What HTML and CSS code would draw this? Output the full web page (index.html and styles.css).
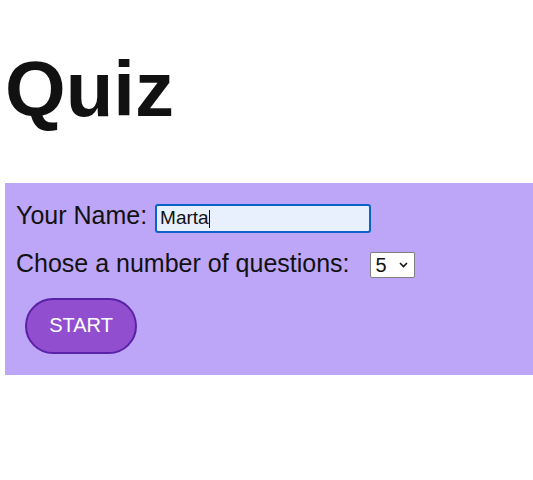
FILE: index.html
```html
<!DOCTYPE html>
<html lang="en">
<head>
<meta charset="utf-8">
<title>Quiz</title>
<link rel="stylesheet" href="styles.css">
</head>
<body>
<h1 class="title">Quiz</h1>
<form class="panel">
  <div class="row row-name">
    <label class="label" for="name">Your Name:</label>
    <span class="field">
      <input class="input" id="name" type="text" value="Marta">
      <span class="caret"></span>
    </span>
  </div>
  <div class="row row-count">
    <label class="label" for="count">Chose a number of questions:</label>
    <select class="select" id="count">
      <option>5</option>
      <option>10</option>
      <option>15</option>
    </select>
  </div>
  <button class="start" type="button">START</button>
</form>
</body>
</html>
```
FILE: styles.css
```css
html, body {
  margin: 0;
  padding: 0;
  background: #ffffff;
}
body {
  padding-left: 5px;
  font-family: "Liberation Sans", Arial, Helvetica, sans-serif;
  color: #111111;
}
.title {
  margin: 45px 0 50px 0;
  font-size: 78px;
  line-height: 88px;
  font-weight: bold;
  color: #111111;
}
.panel {
  display: flex;
  flex-direction: column;
  align-items: flex-start;
  background: #bda5f7;
  padding: 18px 11px 21px 11px;
}
.row {
  display: flex;
  align-items: baseline;
}
.label {
  font-size: 25px;
  line-height: 28px;
  color: #111111;
}
.row-name .label {
  margin-right: 8px;
}
.row-count {
  margin-top: 16px;
}
.row-count .label {
  margin-right: 20px;
}
.field {
  position: relative;
  display: inline-block;
}
.input {
  box-sizing: border-box;
  width: 216px;
  height: 29px;
  margin: 0;
  padding: 0 3px;
  border: 2px solid #0b63c9;
  border-radius: 3px;
  background: #e8f0fe;
  font-family: "Liberation Sans", Arial, sans-serif;
  font-size: 19px;
  color: #111111;
  outline: none;
}
.caret {
  position: absolute;
  left: 54px;
  top: 6px;
  width: 1px;
  height: 18px;
  background: #111111;
}
.select {
  box-sizing: border-box;
  width: 45px;
  height: 26px;
  margin: 0;
  padding: 0 0 0 5px;
  border: 1px solid #808080;
  border-radius: 2px;
  background-color: #ffffff;
  background-image: url("data:image/svg+xml;utf8,<svg xmlns='http://www.w3.org/2000/svg' width='9' height='6' viewBox='0 0 9 6'><path d='M1 1l3.5 3.5L8 1' fill='none' stroke='%23111' stroke-width='1.6'/></svg>");
  background-repeat: no-repeat;
  background-position: right 6px center;
  -webkit-appearance: none;
  appearance: none;
  font-family: "Liberation Sans", Arial, sans-serif;
  font-size: 20px;
  color: #111111;
}
.start {
  margin: 20px 0 0 9px;
  box-sizing: border-box;
  width: 112px;
  height: 56px;
  border: 2px solid #5a22a6;
  border-radius: 28px;
  background: #914fd0;
  color: #ffffff;
  font-family: "Liberation Sans", Arial, sans-serif;
  font-size: 20px;
  padding: 0;
  cursor: pointer;
}
```
